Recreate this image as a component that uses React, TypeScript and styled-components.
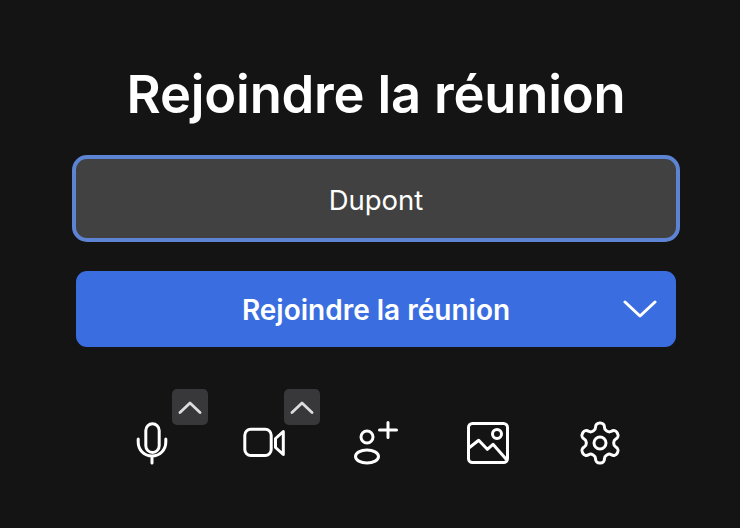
import styled, { createGlobalStyle } from "styled-components";

const GlobalStyle = createGlobalStyle`
    html, body {
        margin: 0;
        padding: 0;
        background: #141414;
    }
`;

const Page = styled.div`
    width: 740px;
    height: 528px;
    box-sizing: border-box;
    padding: 62px 0 0 12px;
    display: flex;
    flex-direction: column;
    align-items: center;
    overflow: hidden;
    background: #141414;
    color: #fff;
    font-family: Inter, "Noto Sans", sans-serif;
`;

const Title = styled.h1`
    margin: 0;
    font-size: 52.5px;
    line-height: 64px;
    font-weight: 600;
    letter-spacing: -0.2px;
`;

const NameInput = styled.div`
    margin-top: 29px;
    width: 608px;
    height: 87px;
    box-sizing: border-box;
    padding-top: 3px;
    border: 4px solid #5d84d2;
    border-radius: 15px;
    background: #414141;
    display: flex;
    align-items: center;
    justify-content: center;
    font-size: 27.5px;
    font-weight: 400;
`;

const JoinButton = styled.button`
    position: relative;
    margin-top: 29px;
    width: 600px;
    height: 76px;
    border: 0;
    padding: 2px 0 0;
    border-radius: 11px;
    background: #3a6ee0;
    color: #fff;
    font-family: inherit;
    font-size: 28px;
    font-weight: 600;
`;

const Caret = styled.svg`
    position: absolute;
    top: 29px;
    right: 19px;
`;

const Toolbar = styled.div`
    margin-top: 42px;
    display: flex;
`;

const Slot = styled.div`
    position: relative;
    width: 112px;
    height: 80px;
    display: flex;
    align-items: center;
    justify-content: center;
`;

const Badge = styled.div`
    position: absolute;
    top: 0;
    left: 76px;
    width: 36px;
    height: 36px;
    border-radius: 5px;
    background: #38383b;
    display: flex;
    align-items: center;
    justify-content: center;
`;

const Icon = styled.svg`
    margin-top: 28px;
    fill: none;
    stroke: #fff;
    stroke-width: 3;
    stroke-linecap: round;
    stroke-linejoin: round;
`;

const GearIcon = styled(Icon)`
    stroke-width: 1.5;
`;

const Chevron = () => (
    <svg width="24" height="13" viewBox="0 0 24 13" fill="none" stroke="#dcdcde" strokeWidth="2.8" strokeLinecap="round" strokeLinejoin="round">
        <path d="M2 11.500 12 2l10 9.500" />
    </svg>
);

export default function App() {
    return (
        <>
            <GlobalStyle />
            <Page>
                <Title>Rejoindre la réunion</Title>
                <NameInput>Dupont</NameInput>
                <JoinButton>
                    Rejoindre la réunion
                    <Caret width="34" height="18" viewBox="0 0 34 18" fill="none" stroke="#fff" strokeWidth="3" strokeLinecap="round" strokeLinejoin="round">
                        <path d="M2 2l15 14L32 2" />
                    </Caret>
                </JoinButton>
                <Toolbar>
                    <Slot>
                        <Icon width="44" height="44" viewBox="0 0 44 44">
                            <rect x="15.800" y="2.800" width="13.400" height="28.700" rx="6.700" />
                            <path d="M8.200 18v3c0 8 6 14 13.800 14s13.800-6 13.800-14v-3M22 35v7" />
                        </Icon>
                        <Badge><Chevron /></Badge>
                    </Slot>
                    <Slot>
                        <Icon width="44" height="44" viewBox="0 0 44 44">
                            <rect x="2.800" y="8.200" width="26.400" height="26.300" rx="6" />
                            <path d="M33.500 17.500l7.800-7v23l-7.800-7z" />
                        </Icon>
                        <Badge><Chevron /></Badge>
                    </Slot>
                    <Slot>
                        <Icon width="44" height="44" viewBox="0 0 44 44">
                            <circle cx="13" cy="16" r="6" />
                            <ellipse cx="13" cy="35.500" rx="11.500" ry="6.500" />
                            <path d="M25.500 9h17M34 1.500v15" />
                        </Icon>
                    </Slot>
                    <Slot>
                        <Icon width="44" height="44" viewBox="0 0 44 44">
                            <rect x="2.500" y="2.500" width="39" height="39" rx="4" />
                            <circle cx="31" cy="13" r="4.500" />
                            <path d="M3.500 26.500l9.200-7.200 8.600 9 5.700-5L40 38" />
                        </Icon>
                    </Slot>
                    <Slot>
                        <GearIcon width="48" height="48" viewBox="0 0 24 24">
                            <path d="M12.220 2h-.440a2 2 0 0 0-2 2v.180a2 2 0 0 1-1 1.730l-.430.250a2 2 0 0 1-2 0l-.150-.080a2 2 0 0 0-2.730.730l-.220.380a2 2 0 0 0 .730 2.730l.150.100a2 2 0 0 1 1 1.720v.510a2 2 0 0 1-1 1.740l-.150.090a2 2 0 0 0-.730 2.730l.220.380a2 2 0 0 0 2.730.730l.150-.080a2 2 0 0 1 2 0l.430.250a2 2 0 0 1 1 1.730V20a2 2 0 0 0 2 2h.440a2 2 0 0 0 2-2v-.180a2 2 0 0 1 1-1.730l.430-.250a2 2 0 0 1 2 0l.150.080a2 2 0 0 0 2.730-.730l.220-.390a2 2 0 0 0-.730-2.730l-.150-.080a2 2 0 0 1-1-1.740v-.500a2 2 0 0 1 1-1.740l.150-.090a2 2 0 0 0 .730-2.730l-.220-.380a2 2 0 0 0-2.730-.730l-.150.080a2 2 0 0 1-2 0l-.430-.250a2 2 0 0 1-1-1.730V4a2 2 0 0 0-2-2z" />
                            <circle cx="12" cy="12" r="3" />
                        </GearIcon>
                    </Slot>
                </Toolbar>
            </Page>
        </>
    );
}
